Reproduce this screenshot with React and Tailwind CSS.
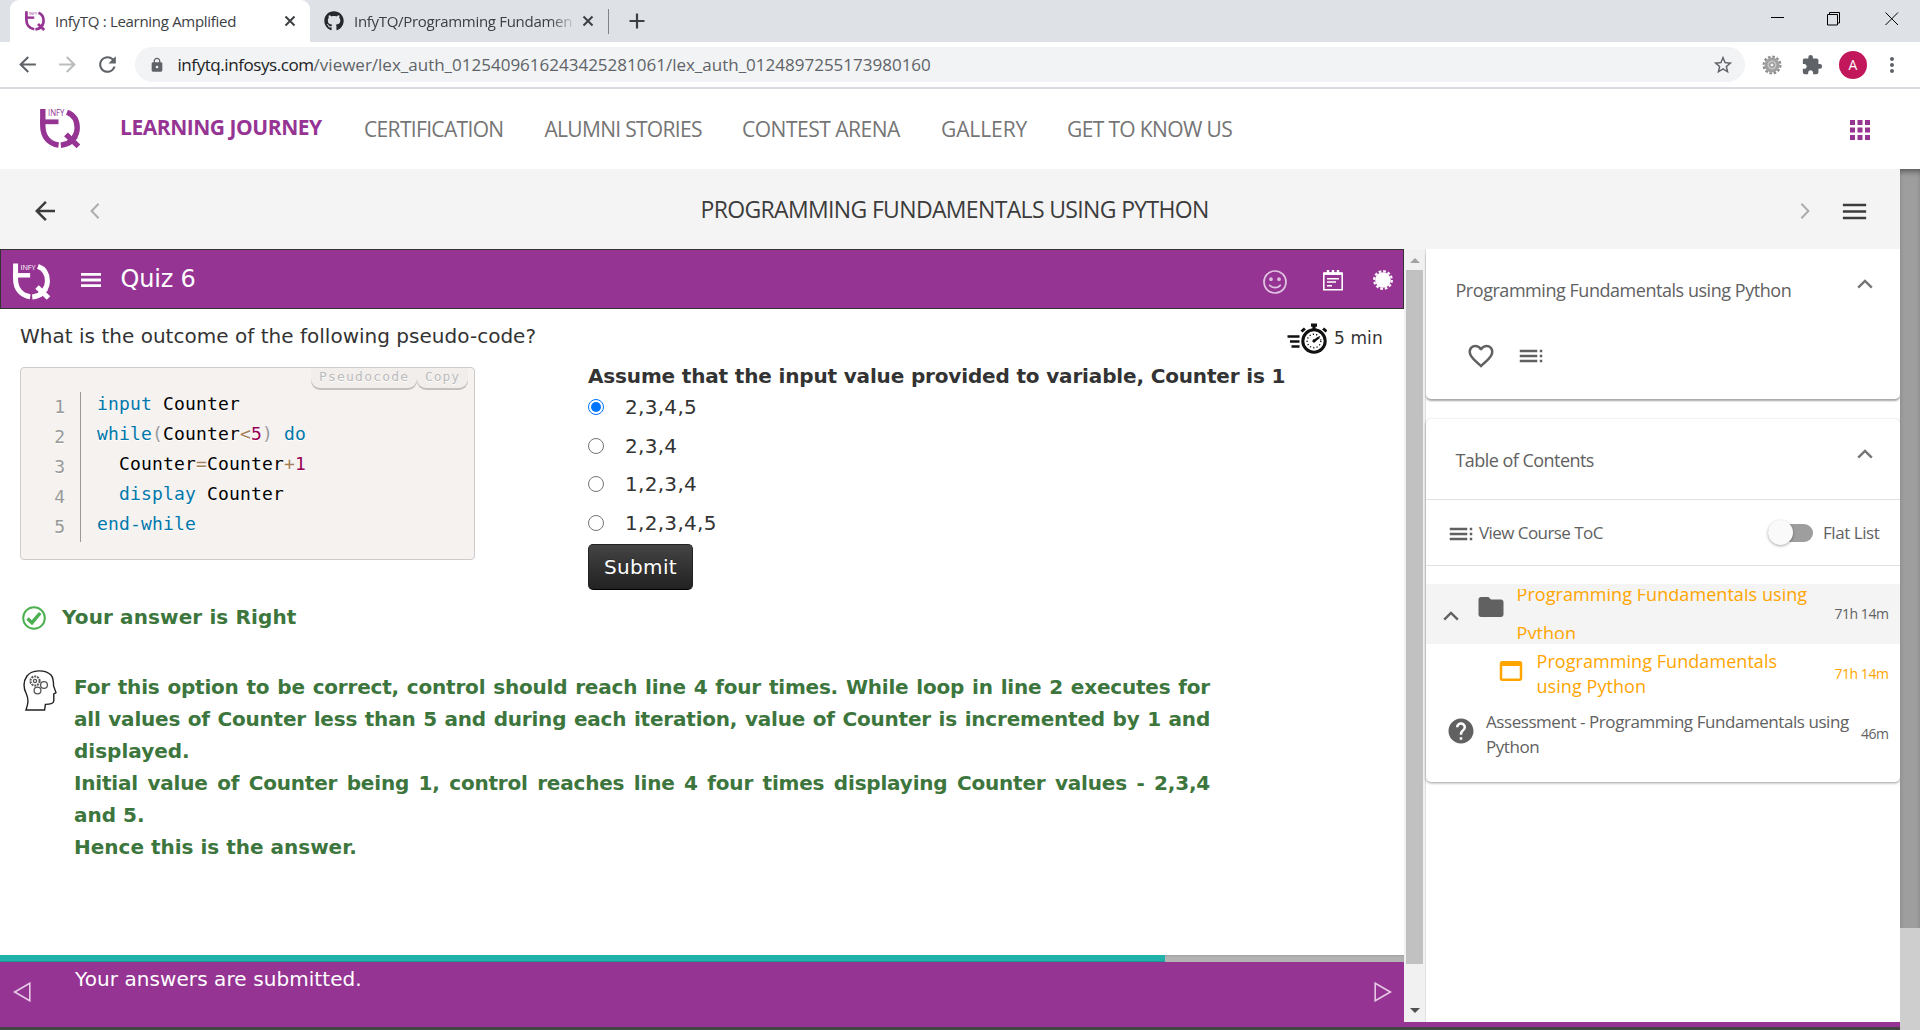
import {
  MdToc, MdFolder, MdFavoriteBorder, MdHelp, MdWebAsset, MdExtension, MdStarBorder,
  MdLock, MdApps, MdMenu, MdRefresh, MdArrowBack, MdArrowForward, MdMoreVert,
} from 'react-icons/md';
import { FaGithub } from 'react-icons/fa';

function Logo({ className }) {
  return (
    <svg viewBox="0 0 40 39" className={className} overflow="visible" fill="none" stroke="currentColor" strokeWidth="5.4">
      <path d="M2.8 0V17C2.8 27.5 9 34.8 18.6 36" />
      <path d="M0 12.8H18.5" strokeWidth="4.8" />
      <path d="M27 3.2C33.5 5.6 37.2 11.2 37.2 19C37.2 22.8 36 26 34 28.6" />
      <path d="M20.8 36.2C25 35.8 28.6 34.6 31.6 32" />
      <path d="M26 25.4L38.4 37.4M36 27L28 34.4" />
      <text x="8" y="7" fontSize="8.6" textLength="16.5" lengthAdjust="spacingAndGlyphs" fill="currentColor" stroke="none" fontFamily="Open Sans, sans-serif">INFY</text>
    </svg>
  );
}

function Cross({ className }) {
  return (
    <svg viewBox="0 0 12 12" className={className} fill="none" stroke="currentColor" strokeWidth="2">
      <path d="M1.5 1.5l9 9M10.5 1.5l-9 9" />
    </svg>
  );
}

function Chevron({ className }) {
  return (
    <svg viewBox="0 0 16 10" className={className} fill="none" stroke="currentColor" strokeWidth="2.4">
      <path d="M1.2 8.6L8 1.9l6.8 6.7" />
    </svg>
  );
}

function BrowserTabs() {
  return (
    <div className="flex h-[42px] bg-[#dee1e6] text-[15px] leading-[30px] text-[#3c4043]">
      <div className="ml-[10px] flex h-[42px] w-[300px] items-center rounded-t-[9px] bg-white pl-[15px]">
        <Logo className="h-5 w-5 shrink-0 text-[#963494]" />
        <span className="-mt-px ml-[10px] flex-1 whitespace-nowrap tracking-[-0.3px]">InfyTQ : Learning Amplified</span>
        <Cross className="mr-[14px] h-3 w-3" />
      </div>
      <div className="flex w-[298px] items-center pl-[14px]">
        <FaGithub className="h-5 w-5 shrink-0 text-[#24292e]" />
        <span className="-mt-px ml-[10px] w-[218px] whitespace-nowrap tracking-[-0.3px] [mask-image:linear-gradient(to_right,black_90%,transparent_102%)]">
          InfyTQ/Programming Fundamen
        </span>
        <Cross className="ml-[10px] h-3 w-3" />
      </div>
      <div className="mt-[9px] h-[25px] w-px bg-[#808488]" />
      <svg viewBox="0 0 16 16" className="ml-5 mt-[13px] h-4 w-4" fill="none" stroke="currentColor" strokeWidth="2.2">
        <path d="M8 0.5v15M0.5 8h15" />
      </svg>
      <svg viewBox="0 0 128 14" className="ml-auto mr-[21px] mt-[12px] h-[14px] w-[128px]" fill="none" stroke="black" strokeWidth="1">
        <path d="M0 5.5h13M56.5 2.5h10v10.5h-10zM58.5 2.5v-2h10v10.5h-2M114.5 0.5l12.5 12.5M127 0.5l-12.5 12.5" />
      </svg>
    </div>
  );
}

function GearBadge() {
  return (
    <svg viewBox="0 0 24 24" className="h-6 w-6" fill="none">
      <circle cx="12" cy="12" r="8.4" stroke="#8d8d8d" strokeWidth="2.2" strokeDasharray="2.6 1.8" />
      <circle cx="12" cy="12" r="6" fill="#c4c4c4" stroke="#a0a0a0" strokeWidth="3" />
      <circle cx="12" cy="12" r="2.2" fill="#f4f4f4" stroke="#777" />
    </svg>
  );
}

function AddressBar() {
  return (
    <div className="flex h-[47px] items-center border-b-2 border-[#dadae0] bg-white text-[#5f6368]">
      <MdArrowBack className="ml-[15px] h-[25px] w-[25px]" />
      <MdArrowForward className="ml-[15px] h-[25px] w-[25px] text-[#babcbe]" />
      <MdRefresh className="ml-[15px] h-[25px] w-[25px]" />
      <div className="ml-[15px] flex h-[35px] w-[1610px] items-center rounded-full bg-[#f1f3f4] pl-[14px] pr-[11px]">
        <MdLock className="h-4 w-4" />
        <span className="ml-[12.5px] flex-1 whitespace-nowrap text-[17px] leading-[34px]">
          <span className="tracking-[-0.43px] text-[#202124]">infytq.infosys.com</span>/viewer/lex_auth_0125409616243425281061/lex_auth_0124897255173980160
        </span>
        <MdStarBorder className="h-[22px] w-[22px]" />
      </div>
      <div className="ml-[15px]"><GearBadge /></div>
      <MdExtension className="ml-[17px] h-[22px] w-[22px]" />
      <div className="ml-[16px] flex h-7 w-7 items-center justify-center rounded-full bg-[#c2185b] text-[14px] text-white">A</div>
      <MdMoreVert className="ml-[13px] h-6 w-6" />
    </div>
  );
}

function SiteNav() {
  return (
    <div className="flex h-[80px] bg-white text-[21px] leading-[30px] whitespace-nowrap text-[#757575]">
      <Logo className="ml-10 mt-5 h-[39px] w-10 text-[#963494]" />
      <span className="ml-[40px] mt-[23px] w-[244px] font-bold tracking-[-0.46px] text-[#963494]">LEARNING JOURNEY</span>
      <span className="mt-[25px] w-[180.5px] tracking-[-0.66px]">CERTIFICATION</span>
      <span className="mt-[25px] w-[197.5px] tracking-[-0.7px]">ALUMNI STORIES</span>
      <span className="mt-[25px] w-[199px] tracking-[-0.48px]">CONTEST ARENA</span>
      <span className="mt-[25px] w-[126px] tracking-[-0.1px]">GALLERY</span>
      <span className="mt-[25px] tracking-[-0.64px]">GET TO KNOW US</span>
      <MdApps className="ml-auto mr-[45px] mt-[26px] h-[30px] w-[30px] text-[#963494]" />
    </div>
  );
}

function TitleBar() {
  return (
    <div className="flex h-[80px] items-center bg-[#f4f4f4] pb-[4px] pt-[8px] text-[#3c3c3c]">
      <MdArrowBack className="ml-[29.5px] h-[30px] w-[30px]" />
      <svg viewBox="0 0 10 16" className="ml-[30px] h-4 w-[10px]" fill="none" stroke="#acacac" strokeWidth="2">
        <path d="M8.6 0.8L1.6 8l7 7.2" />
      </svg>
      <span className="ml-[601px] -mt-[5px] whitespace-nowrap text-[23px] leading-[34px] tracking-[-0.65px]">PROGRAMMING FUNDAMENTALS USING PYTHON</span>
      <svg viewBox="0 0 10 16" className="ml-auto h-4 w-[10px]" fill="none" stroke="#acacac" strokeWidth="2">
        <path d="M1.4 0.8L8.4 8l-7 7.2" />
      </svg>
      <MdMenu className="ml-[29px] mr-[30px] h-[31px] w-[31px]" />
    </div>
  );
}

function QuizHeader() {
  return (
    <div className="flex h-[60px] border border-[#333] bg-[#963494] text-white">
      <Logo className="ml-3 mt-[13px] h-[37px] w-[37px]" />
      <svg viewBox="0 0 20 14" className="ml-[31px] mt-[23px] h-[14px] w-5" fill="none" stroke="white" strokeWidth="2.8">
        <path d="M0 1.4h20M0 7h20M0 12.6h20" />
      </svg>
      <span className="ml-[19.5px] mt-[13px] text-[24px] leading-[32px] tracking-[-0.2px]">Quiz 6</span>
      <svg viewBox="0 0 24 24" className="ml-auto mt-5 h-6 w-6 opacity-70" fill="none" stroke="white" strokeWidth="1.7">
        <circle cx="12" cy="12" r="11" />
        <path d="M6.2 14.8c3 3.8 8.6 3.8 11.6 0" />
        <circle cx="8" cy="9.2" r="1" fill="white" />
        <circle cx="16" cy="9.2" r="1" fill="white" />
      </svg>
      <svg viewBox="0 0 20 21" className="ml-9 mt-[20px] h-[21px] w-5" fill="none" stroke="white" strokeWidth="1.6">
        <path d="M0.8 3.4h18.4v16.4H0.8z" />
        <path d="M0.8 3.6h18.4" strokeWidth="2.6" />
        <path d="M5 0v5M10 0v5M15 0v5" strokeWidth="2.4" />
        <path d="M4 8.8h12M4 12h9M4 15.8h5" strokeWidth="1.4" />
      </svg>
      <svg viewBox="0 0 20 20" className="ml-[30px] mr-[10px] mt-5 h-5 w-5">
        <circle cx="10" cy="10" r="7.8" fill="white" />
        <circle cx="10" cy="10" r="8.8" fill="none" stroke="white" strokeWidth="2.2" strokeDasharray="2.7 1.9" />
      </svg>
    </div>
  );
}

function Timer() {
  return (
    <svg viewBox="0 0 40 32" className="h-8 w-10" fill="none" stroke="#111">
      <path d="M0.5 13.5h12M3 18.5h9.5M4.5 23.5h8" strokeWidth="2.6" />
      <circle cx="27" cy="18" r="11.2" strokeWidth="3" />
      <circle cx="27" cy="18" r="6.8" strokeWidth="1.4" strokeDasharray="1.2 2.2" />
      <path d="M27 18l5-3.6" strokeWidth="2.4" />
      <circle cx="27" cy="18" r="1.2" fill="#111" />
      <path d="M27 2v5M24 2.2h6" strokeWidth="3.2" />
      <path d="M14.5 8.5l3.4-3M39.5 8.5l-3.4-3" strokeWidth="3" />
    </svg>
  );
}

const K = ({ children }) => <span className="text-[#0077aa]">{children}</span>;
const O = ({ children }) => <span className="text-[#a67f59]">{children}</span>;
const N = ({ children }) => <span className="text-[#990055]">{children}</span>;
const P = ({ children }) => <span className="text-[#999]">{children}</span>;

function CodeBox() {
  return (
    <div className="relative mt-[3px] flex h-[193px] w-[455px] rounded-[4px] border border-[#ccc] bg-[#f5f2f0] font-['DejaVu_Sans_Mono',monospace] text-[18px] leading-[30px] [text-shadow:0_1px_white]">
      <div className="absolute right-[6px] top-0 flex text-[13px] leading-[18px] tracking-[1.2px] text-[#bbb]">
        <span className="h-[20px] w-[106px] rounded-b-[9px] bg-[#f1eeec] pl-2 shadow-[0_2px_0_0_rgba(0,0,0,0.2)]">Pseudocode</span>
        <span className="h-[20px] w-[51px] rounded-b-[9px] bg-[#f1eeec] pl-2 tracking-[0.9px] shadow-[0_2px_0_0_rgba(0,0,0,0.2)]">Copy</span>
      </div>
      <div className="mt-[24px] flex h-[150px] w-[60px] flex-col border-r border-[#999] pr-[15px] text-right text-[#999]">
        {[1, 2, 3, 4, 5].map((n) => <span key={n}>{n}</span>)}
      </div>
      <pre className="ml-[16px] mt-[20.6px] font-['DejaVu_Sans_Mono',monospace] tracking-[0.16px] text-black">
        <K>input</K>{' Counter\n'}
        <K>while</K><P>(</P>Counter<O>&lt;</O><N>5</N><P>)</P> <K>do</K>{'\n'}
        {'  Counter'}<O>=</O>Counter<O>+</O><N>1</N>{'\n'}
        {'  '}<K>display</K>{' Counter\n'}
        <K>end-while</K>
      </pre>
    </div>
  );
}

function Answers() {
  const options = ['2,3,4,5', '2,3,4', '1,2,3,4', '1,2,3,4,5'];
  return (
    <div className="ml-[113px]">
      <div className="whitespace-nowrap font-bold leading-[24px] tracking-[-0.16px]">
        Assume that the input value provided to variable, Counter is 1
      </div>
      {options.map((o, i) => (
        <div key={o} className="flex h-[38.5px] items-center tracking-[0.3px]">
          {i === 0 ? (
            <span className="mr-[21px] flex h-4 w-4 items-center justify-center rounded-full border-[1.5px] border-[#0075ff]">
              <span className="h-[10px] w-[10px] rounded-full bg-[#0075ff]" />
            </span>
          ) : (
            <span className="mr-[21px] h-4 w-4 rounded-full border border-[#767676]" />
          )}
          {o}
        </div>
      ))}
      <button className="mt-[2px] h-[46px] w-[105px] rounded-[5px] border border-[#222] border-b-black bg-linear-to-b from-[#444] to-[#222] tracking-[0.35px] text-white [text-shadow:0_-1px_0_rgba(0,0,0,0.25)]">
        Submit
      </button>
    </div>
  );
}

function HeadIcon() {
  return (
    <svg viewBox="0 0 34 41" className="h-[41px] w-[34px]" fill="none" stroke="#222" strokeWidth="1.4">
      <path d="M3 40C5 34 6 30 3.4 24C0.4 18 0.4 11 4 6C9 -0.6 22 -0.8 28 5C30.4 8 30.6 13 30.6 16L33 22.6L30.8 24V31C30.6 34 26 34.4 22.4 34.4L21.6 40Z" />
      <g stroke="#555" strokeWidth="1.3">
        <circle cx="12" cy="11" r="4.6" strokeDasharray="2 0.9" strokeWidth="2" />
        <circle cx="12" cy="11" r="1.6" />
        <circle cx="21" cy="15" r="3.4" />
        <circle cx="14.5" cy="20.5" r="3.4" />
      </g>
    </svg>
  );
}

function Feedback() {
  const lines = [
    ['For this option to be correct, control should reach line 4 four times. While loop in line 2 executes for', true],
    ['all values of Counter less than 5 and during each iteration, value of Counter is incremented by 1 and', true],
    ['displayed.', false],
    ['Initial value of Counter being 1, control reaches line 4 four times displaying Counter values - 2,3,4', true],
    ['and 5.', false],
    ['Hence this is the answer.', false],
  ];
  return (
    <div className="font-bold text-[#3c763d]">
      <div className="ml-[22px] mt-[13px] flex h-[30px] items-center">
        <svg viewBox="0 0 24 24" className="h-6 w-6" fill="none" stroke="#4bb04f">
          <circle cx="12" cy="12" r="10.8" strokeWidth="2" />
          <path d="M5.5 12.5l4.5 4.2L18.2 7" strokeWidth="3.4" />
        </svg>
        <span className="-mt-[2px] ml-4 tracking-[0.12px]">Your answer is Right</span>
      </div>
      <div className="ml-[23px] mt-[37px] flex">
        <HeadIcon />
        <div className="ml-[17px] mt-px w-[1136px] leading-[32px]">
          {lines.map(([text, full]) => (
            <div key={text} className={full ? 'whitespace-nowrap tracking-[-0.2px] [text-align-last:justify]' : ''}>{text}</div>
          ))}
        </div>
      </div>
    </div>
  );
}

function Quiz() {
  return (
    <div className="flex h-full w-[1404px] flex-col bg-white font-['DejaVu_Sans',Verdana,sans-serif] text-[20px] text-[#333]">
      <QuizHeader />
      <div className="flex h-[55px]">
        <span className="ml-5 mt-[15px] leading-[24px] tracking-[0.02px]">What is the outcome of the following pseudo-code?</span>
        <div className="ml-auto mt-[14px]"><Timer /></div>
        <span className="ml-[7px] mr-[21px] mt-[17px] w-[49px] whitespace-nowrap text-[17px] leading-[24px] tracking-[0.1px]">5 min</span>
      </div>
      <div className="ml-5 flex">
        <CodeBox />
        <Answers />
      </div>
      <Feedback />
      <div className="mt-auto flex h-[7px] bg-[#b3b3b3] shadow-[inset_0_1px_2px_rgba(0,0,0,0.1)]">
        <div className="w-[1165px] bg-[#20b2aa] shadow-[inset_0_-1px_0_rgba(0,0,0,0.15)]" />
      </div>
      <div className="flex h-[60px] bg-[#963494] text-white">
        <svg viewBox="0 0 18 20" className="ml-[13px] mt-5 h-5 w-[18px]" fill="none" stroke="#e6c8e6" strokeWidth="1.6">
          <path d="M16.8 1.2v17.6L1.6 10z" />
        </svg>
        <span className="ml-[44px] mt-[5px] leading-[24px] tracking-[0.08px]">Your answers are submitted.</span>
        <svg viewBox="0 0 18 20" className="ml-auto mr-[12px] mt-5 h-5 w-[18px]" fill="none" stroke="#e6c8e6" strokeWidth="1.6">
          <path d="M1.2 1.2v17.6L16.4 10z" />
        </svg>
      </div>
    </div>
  );
}

function QuizScrollbar() {
  return (
    <div className="flex w-[21px] flex-col items-center bg-[#f1f1f1]">
      <div className="mt-[9px] h-0 w-0 border-x-[5px] border-b-[5px] border-x-transparent border-b-[#a3a3a3]" />
      <div className="mt-[7px] h-[694px] w-[17px] bg-[#c1c1c1]" />
      <div className="mt-[44px] h-0 w-0 border-x-[5px] border-t-[5px] border-x-transparent border-t-[#505050]" />
    </div>
  );
}

function Sidebar() {
  return (
    <div className="w-[475px] border-l border-[#e0e0e0] bg-white text-[18px] text-[#616161]">
      <div className="h-[150px] rounded-[5px] bg-white shadow-[0_2px_2px_rgba(0,0,0,0.35)]">
        <div className="flex pl-[29.5px] pt-[24px]">
          <span className="mt-[2.5px] flex-1 whitespace-nowrap leading-[28px] tracking-[-0.46px]">Programming Fundamentals using Python</span>
          <Chevron className="mr-[27px] mt-[6px] h-[10px] w-4 text-[#757575]" />
        </div>
        <div className="flex items-center pl-[40px] pt-[37.5px]">
          <MdFavoriteBorder className="h-[30px] w-[30px]" />
          <MdToc className="ml-[20px] h-[30px] w-[30px]" />
        </div>
      </div>
      <div className="mt-5 h-[363px] rounded-[5px] bg-white shadow-[0_1px_3px_rgba(0,0,0,0.4)]">
        <div className="flex h-[81px] border-b border-[#e0e0e0] pl-[29.5px] pt-[24px]">
          <span className="mt-[2.5px] flex-1 leading-[28px] tracking-[-0.54px]">Table of Contents</span>
          <Chevron className="mr-[27px] mt-[6px] h-[10px] w-4 text-[#757575]" />
        </div>
        <div className="flex h-[66px] items-center border-b border-[#e0e0e0] pl-[20px] text-[17px]">
          <MdToc className="mt-[3px] h-[30px] w-[30px]" />
          <span className="ml-[3px] whitespace-nowrap tracking-[-0.56px]">View Course ToC</span>
          <div className="ml-auto flex h-[18px] w-[45px] items-center rounded-full bg-[#9e9e9e]">
            <span className="h-[25px] w-[25px] shrink-0 rounded-full bg-[#fafafa] shadow-[0_1px_3px_rgba(0,0,0,0.35)]" />
          </div>
          <span className="ml-[10px] mr-[21px] w-[56px] whitespace-nowrap tracking-[-0.44px]">Flat List</span>
        </div>
        <div className="mt-[18px] flex h-[60px] bg-[#f4f4f4]">
          <Chevron className="ml-[17px] mt-[27px] h-[10px] w-4 shrink-0" />
          <MdFolder className="ml-[17px] mt-[8px] h-[30px] w-[30px] shrink-0" />
          <div className="ml-[10.5px] mt-[5px] h-[50px] w-[300px] overflow-hidden text-[#ffa500]">
            <div className="-mt-[14.5px] whitespace-nowrap leading-[39.6px] tracking-[0.06px]">Programming Fundamentals using<br />Python</div>
          </div>
          <span className="ml-auto mr-[11.5px] mt-[20px] text-[14px] leading-[20px] tracking-[-0.45px]">71h 14m</span>
        </div>
        <div className="flex h-[58px] text-[#ffa500]">
          <MdWebAsset className="ml-[70px] mt-[12px] h-[30px] w-[30px] shrink-0" />
          <div className="ml-[10.5px] mt-[5px] whitespace-nowrap leading-[25px] tracking-[0.06px]">Programming Fundamentals<br />using Python</div>
          <span className="ml-auto mr-[11.5px] mt-[20px] text-[14px] leading-[20px] tracking-[-0.45px]">71h 14m</span>
        </div>
        <div className="flex h-[59px]">
          <MdHelp className="ml-[20px] mt-[14px] h-[30px] w-[30px] shrink-0" />
          <div className="ml-[10px] mt-[6.5px] whitespace-nowrap text-[17px] leading-[25px] tracking-[-0.44px]">Assessment - Programming Fundamentals using<br />Python</div>
          <span className="ml-auto mr-[11.5px] mt-[22px] text-[14px] leading-[20px] tracking-[-0.45px]">46m</span>
        </div>
      </div>
    </div>
  );
}

export default function App() {
  return (
    <div className="flex h-[1030px] w-[1920px] flex-col overflow-hidden bg-white font-['Open_Sans','Segoe_UI',sans-serif]">
      <BrowserTabs />
      <AddressBar />
      <SiteNav />
      <div className="flex h-[861px]">
        <div className="w-[1900px]">
          <TitleBar />
          <div className="flex h-[773px]">
            <Quiz />
            <QuizScrollbar />
            <Sidebar />
          </div>
          <div className="h-[5px] bg-[#963494]" />
          <div className="h-[3px] bg-[#444]" />
        </div>
        <div className="w-5 bg-[#cecece]">
          <div className="h-[759px] bg-[#9e9e9e] shadow-[inset_0_5px_6px_-3px_rgba(0,0,0,0.5)]" />
        </div>
      </div>
    </div>
  );
}
